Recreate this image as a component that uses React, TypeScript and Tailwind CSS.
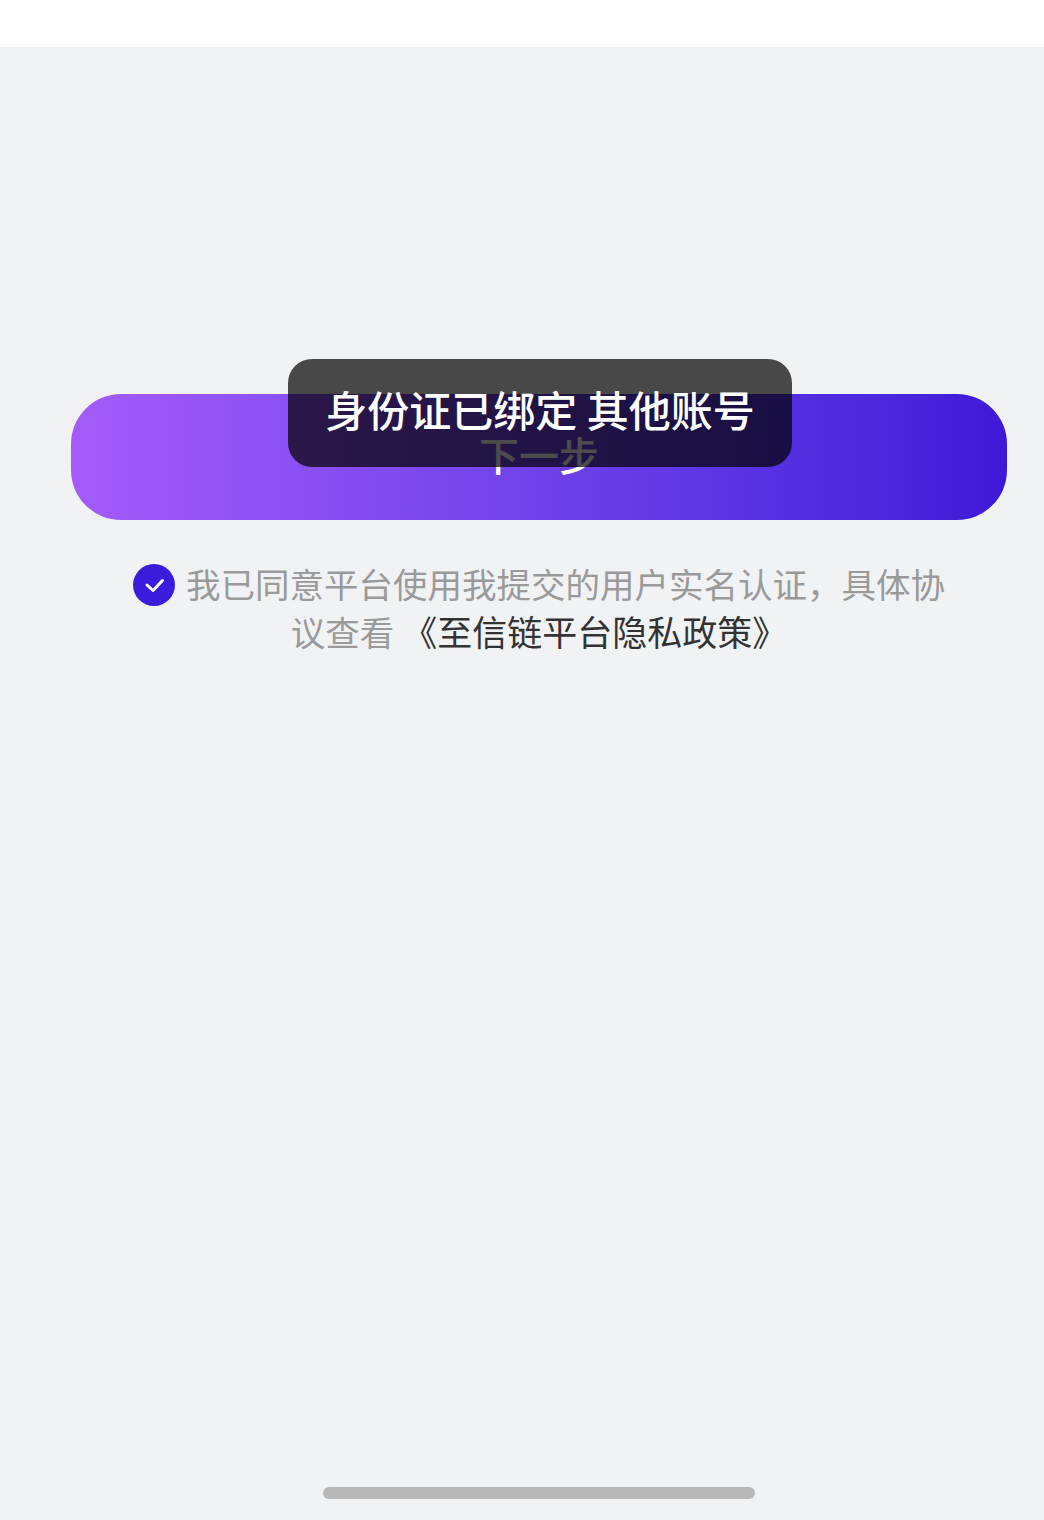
export default function App() {
  return (
    <div className="relative flex h-[1520px] w-[1044px] flex-col overflow-hidden bg-[#f1f2f4] font-['Noto_Sans_CJK_SC',sans-serif]">
      {/* Status bar */}
      <div className="h-[47px] bg-white" />

      <main className="flex flex-1 flex-col items-center pl-[71px] pr-[37px] pt-[347px]">
        <button className="flex h-[126px] w-full items-center justify-center rounded-[50px] bg-gradient-to-r from-[#a55bfb] to-[#3e18d8] pb-[6px] text-[40px] leading-none font-medium text-white">
          下一步
        </button>

        {/* Agreement */}
        <p className="mt-[40px] w-[816px] text-center text-[34.5px] leading-[47px] text-[#9a9a9a]">
          <span className="-my-[10px] mr-[11px] inline-flex h-[42px] w-[42px] items-center justify-center rounded-full bg-[#3b1bdc] align-[-8px]">
            <svg width="42" height="42" viewBox="0 0 42 42" fill="none">
              <path d="M14 21l6 5.5 9.5-10" stroke="#fff" strokeWidth="3" strokeLinecap="round" strokeLinejoin="round" />
            </svg>
          </span>
          我已同意平台使用我提交的用户实名认证，具体协议查看
          <span className="text-[35px] text-[#333333]"> 《至信链平台隐私政策》</span>
        </p>
      </main>

      {/* Home indicator */}
      <div className="mb-[21px] ml-[323px] h-[12px] w-[432px] rounded-full bg-[#b7b8b7]" />

      {/* Toast */}
      <div className="absolute left-[288px] top-[359px] flex h-[108px] w-[504px] items-start justify-center rounded-[24px] bg-black/70 pt-[19px] text-[42px] leading-[62px] font-medium whitespace-nowrap text-white">
        身份证已绑定 其他账号
      </div>
    </div>
  )
}
